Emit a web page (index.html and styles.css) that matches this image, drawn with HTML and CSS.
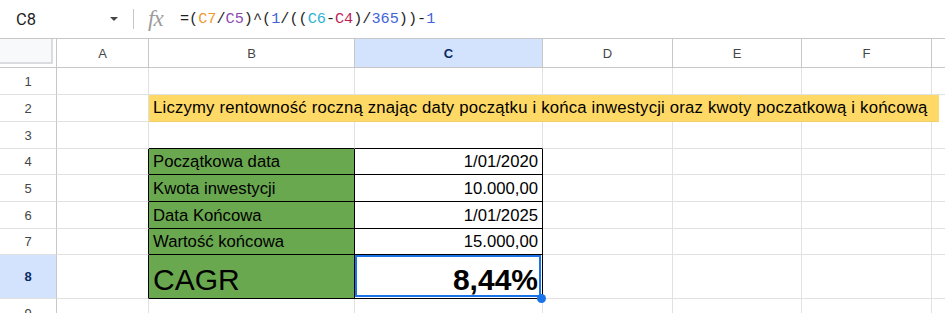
FILE: index.html
```html
<!DOCTYPE html>
<html lang="pl">
  <head>
    <meta charset="UTF-8" />
    <title>CAGR</title>
    <link rel="stylesheet" href="styles.css">
  </head>
  <body>
    <div class="formula-bar">
      <div class="namebox">C8</div>
      <div class="caret"></div>
      <div class="divider"></div>
      <div class="fx">fx</div>
      <div class="formula">=(<span class="ref1">C7</span>/<span class="ref2">C5</span>)^(<span class="num">1</span>/((<span class="ref3">C6</span>-<span class="ref4">C4</span>)/<span class="num">365</span>))-<span class="num">1</span></div>
    </div>

    <div class="grid">
      <!-- column headers -->
      <div class="hd corner"><div class="corner-box"></div></div>
      <div class="hd">A</div>
      <div class="hd">B</div>
      <div class="hd active">C</div>
      <div class="hd">D</div>
      <div class="hd">E</div>
      <div class="hd">F</div>
      <div class="hd last"></div>

      <!-- row 1 -->
      <div class="rh">1</div>
      <div class="c"></div><div class="c"></div><div class="c"></div><div class="c"></div><div class="c"></div><div class="c"></div><div class="c last"></div>

      <!-- row 2 -->
      <div class="rh">2</div>
      <div class="c"></div>
      <div class="c merged"><div class="yellow">Liczymy rentowność roczną znając daty początku i końca inwestycji oraz kwoty poczatkową i końcową</div></div>

      <!-- row 3 -->
      <div class="rh">3</div>
      <div class="c"></div><div class="c bb"></div><div class="c bb"></div><div class="c"></div><div class="c"></div><div class="c"></div><div class="c last"></div>

      <!-- row 4 -->
      <div class="rh">4</div>
      <div class="c rb"></div>
      <div class="c green black">Początkowa data</div>
      <div class="c black num-cell">1/01/2020</div>
      <div class="c"></div><div class="c"></div><div class="c"></div><div class="c last"></div>

      <!-- row 5 -->
      <div class="rh">5</div>
      <div class="c rb"></div>
      <div class="c green black">Kwota inwestycji</div>
      <div class="c black num-cell">10.000,00</div>
      <div class="c"></div><div class="c"></div><div class="c"></div><div class="c last"></div>

      <!-- row 6 -->
      <div class="rh">6</div>
      <div class="c rb"></div>
      <div class="c green black">Data Końcowa</div>
      <div class="c black num-cell">1/01/2025</div>
      <div class="c"></div><div class="c"></div><div class="c"></div><div class="c last"></div>

      <!-- row 7 -->
      <div class="rh">7</div>
      <div class="c rb"></div>
      <div class="c green black">Wartość końcowa</div>
      <div class="c black num-cell">15.000,00</div>
      <div class="c"></div><div class="c"></div><div class="c"></div><div class="c last"></div>

      <!-- row 8 -->
      <div class="rh active">8</div>
      <div class="c rb"></div>
      <div class="c green black big">CAGR</div>
      <div class="c black num-cell big bold selected">8,44%</div>
      <div class="c"></div><div class="c"></div><div class="c"></div><div class="c last"></div>

      <!-- row 9 -->
      <div class="rh">9</div>
      <div class="c"></div><div class="c"></div><div class="c"></div><div class="c"></div><div class="c"></div><div class="c"></div><div class="c last"></div>
    </div>
  </body>
</html>
```

FILE: styles.css
```css
* {
  margin: 0;
  padding: 0;
  box-sizing: border-box;
}

body {
  width: 945px;
  height: 313px;
  overflow: hidden;
  background-color: #fff;
  font-family: "Liberation Sans", Arial, sans-serif;
  color: #000;
}

/* formula bar */
.formula-bar {
  height: 39px;
  display: flex;
  align-items: center;
  padding-left: 16px;
  border-bottom: 1px solid #c7c7c7;
}

.namebox {
  width: 94px;
  font-family: Roboto, "Liberation Sans", sans-serif;
  font-size: 16.5px;
  color: #1f1f1f;
}

.caret {
  width: 0;
  height: 0;
  border-left: 4px solid transparent;
  border-right: 4px solid transparent;
  border-top: 4px solid #444746;
}

.divider {
  width: 1px;
  height: 20px;
  margin-left: 15px;
  background-color: #c7c7c7;
}

.fx {
  width: 19px;
  margin-left: 14px;
  font-family: "Liberation Serif", serif;
  font-style: italic;
  font-size: 23px;
  line-height: 20px;
  color: #9c9c9c;
  letter-spacing: -1px;
}

.formula {
  margin-left: 13px;
  font-family: "Liberation Mono", "DejaVu Sans Mono", monospace;
  font-size: 15.2px;
  color: #1f1f1f;
}

.ref1 { color: #f09a2e; }
.ref2 { color: #8c4cb3; }
.ref3 { color: #2eb2d6; }
.ref4 { color: #bd1f55; }
.num { color: #3f64d8; }

/* sheet */
.grid {
  display: grid;
  grid-template-columns: 57px 92px 206px 188px 130px 129px 130px 1fr;
  grid-template-rows: 29px 27px 27px 27px 26px 27px 27px 26px 44px 30px;
}

.hd,
.rh {
  display: flex;
  justify-content: center;
  align-items: center;
  font-size: 13px;
  color: #444746;
  background-color: #fff;
  border-right: 1px solid #c7c7c7;
  border-bottom: 1px solid #c7c7c7;
}

.hd.last {
  border-right: none;
}

.rh {
  border-bottom-color: #e1e1e1;
}

.hd.active,
.rh.active {
  background-color: #d3e3fd;
  color: #0b2a63;
  font-weight: bold;
}

.corner {
  align-items: flex-start;
  justify-content: flex-start;
}

.corner-box {
  width: 53px;
  height: 25px;
  background-color: #f8f9fa;
  border-right: 2px solid #dadce0;
  border-bottom: 2px solid #dadce0;
}

.c {
  display: flex;
  align-items: flex-end;
  padding: 0 4px 3px;
  font-size: 16.7px;
  line-height: 19px;
  white-space: nowrap;
  border-right: 1px solid #e1e1e1;
  border-bottom: 1px solid #e1e1e1;
}

.c.last {
  border-right: none;
}

.merged {
  grid-column: 3 / -1;
  padding: 0;
  border-right: none;
  border-bottom: none;
}

.yellow {
  width: 790px;
  height: 100%;
  display: flex;
  align-items: flex-end;
  padding: 0 4px 4px;
  letter-spacing: 0.2px;
  background-color: #ffd966;
  border-bottom: 1px solid #f3cf6a;
}

.bb { border-bottom-color: #000; }
.rb { border-right-color: #000; }

.black {
  border-right-color: #000;
  border-bottom-color: #000;
}

.green {
  background-color: #6aa84f;
}

.num-cell {
  justify-content: flex-end;
}

.big {
  font-size: 30px;
  line-height: 34px;
  padding-bottom: 1px;
}

.bold {
  font-weight: bold;
}

.selected {
  position: relative;
}

.selected::after {
  content: "";
  position: absolute;
  top: 0;
  left: 0;
  right: 1px;
  bottom: 1px;
  border: 2px solid #1a73e8;
}

.selected::before {
  content: "";
  position: absolute;
  right: -4px;
  bottom: -5px;
  width: 9px;
  height: 9px;
  border-radius: 50%;
  background-color: #1a73e8;
  z-index: 1;
}
```
